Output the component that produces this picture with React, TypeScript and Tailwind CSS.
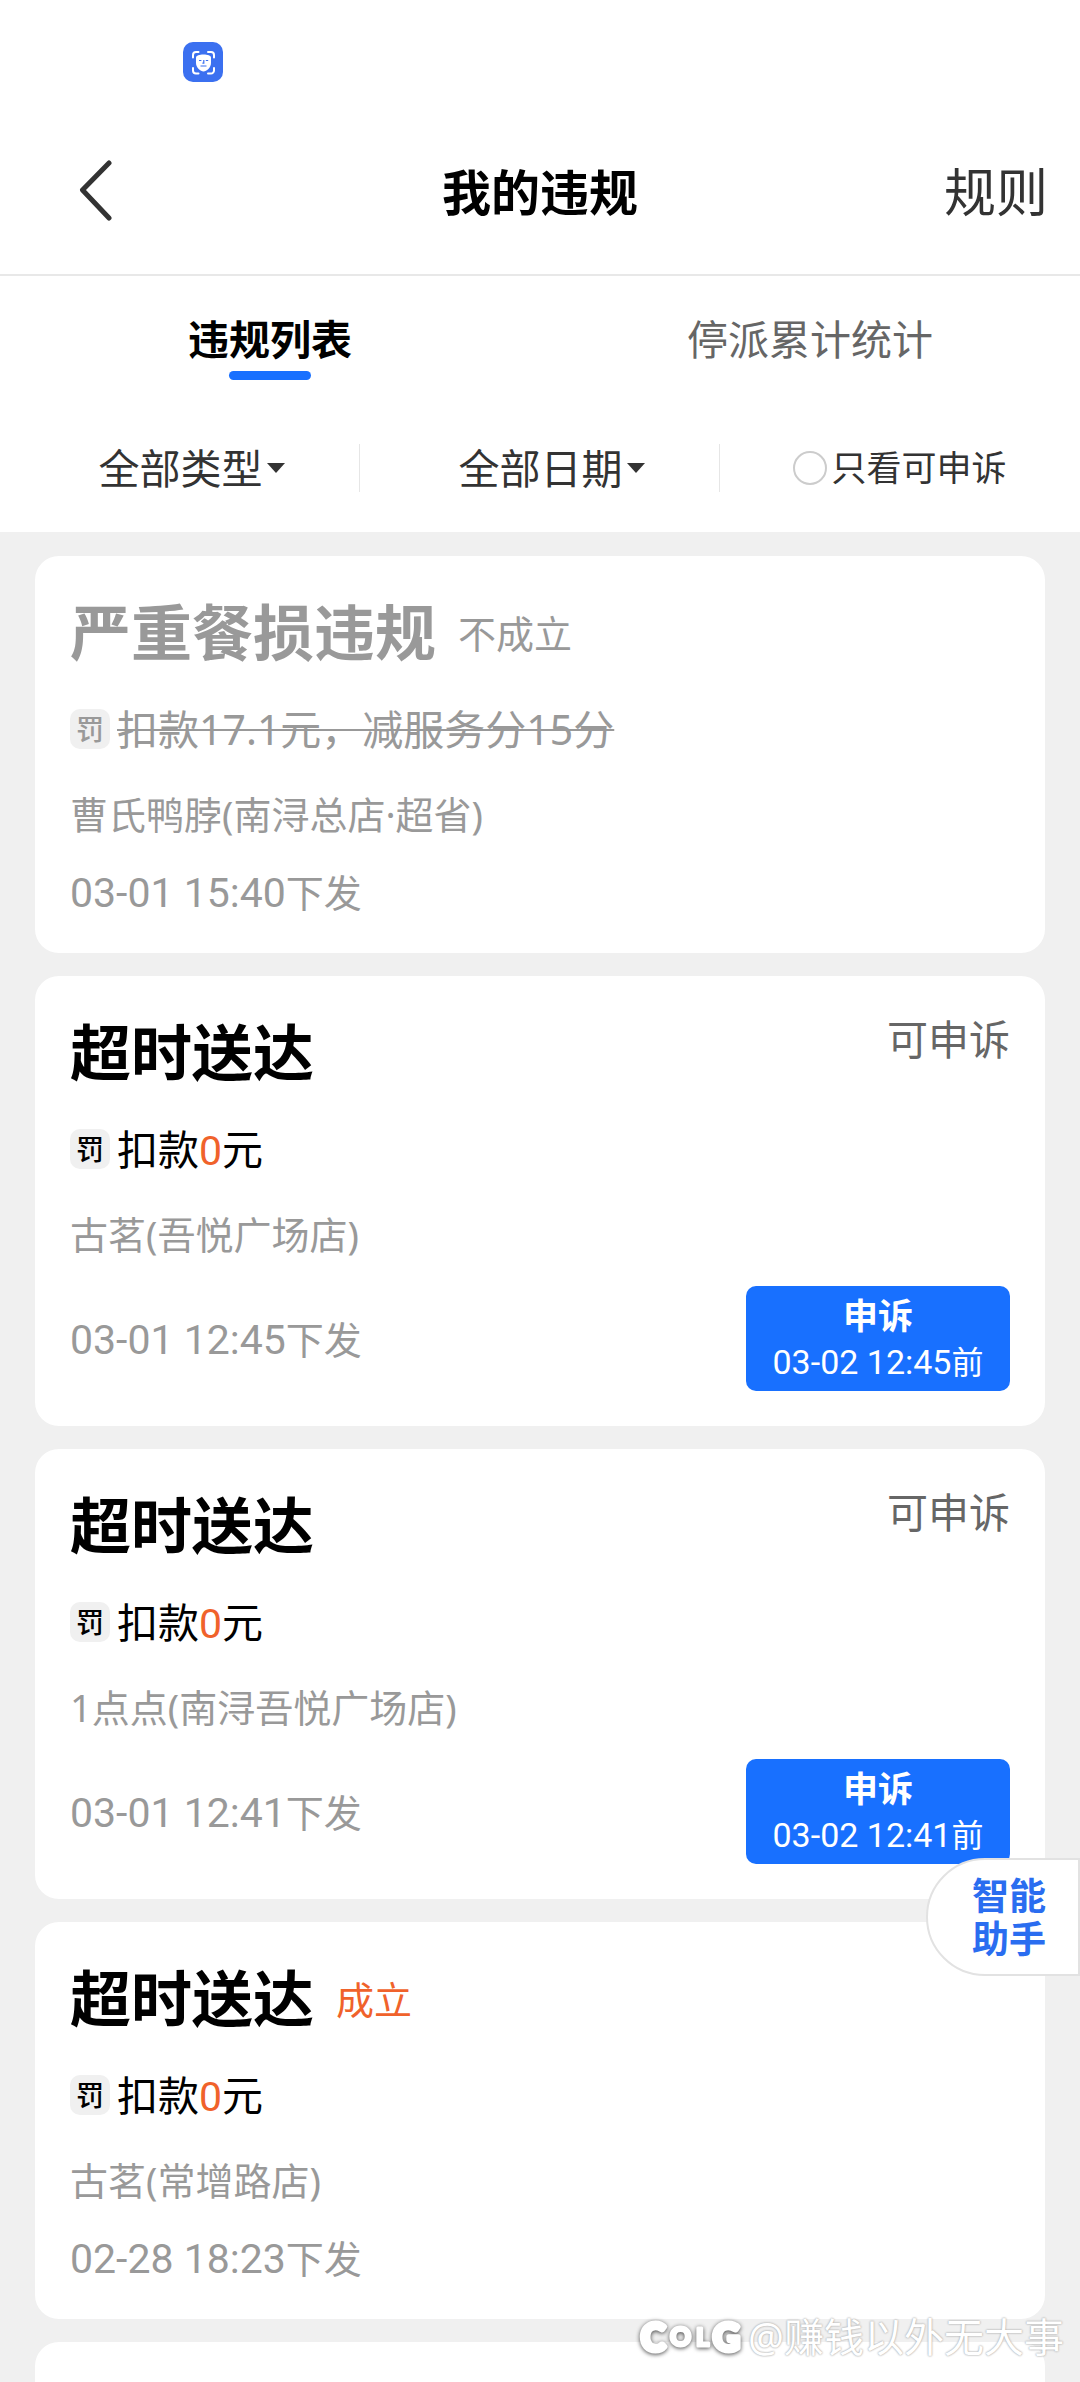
import { useState } from "react";

const violations = [
  {
    title: "严重餐损违规",
    status: "不成立",
    revoked: true,
    penalty: "扣款17.1元，减服务分15分",
    shop: "曹氏鸭脖(南浔总店·超省)",
    time: "03-01 15:40",
  },
  {
    title: "超时送达",
    amount: "0",
    shop: "古茗(吾悦广场店)",
    time: "03-01 12:45",
    deadline: "03-02 12:45",
  },
  {
    title: "超时送达",
    amount: "0",
    shop: "1点点(南浔吾悦广场店)",
    time: "03-01 12:41",
    deadline: "03-02 12:41",
  },
  {
    title: "超时送达",
    status: "成立",
    amount: "0",
    shop: "古茗(常增路店)",
    time: "02-28 18:23",
  },
];

type Violation = {
  title: string;
  status?: string;
  revoked?: boolean;
  penalty?: string;
  amount?: string;
  shop: string;
  time: string;
  deadline?: string;
};

const FaceIcon = () => (
  <svg viewBox="0 0 40 40" className="h-10 w-10" aria-hidden="true">
    <rect width="40" height="40" rx="10" fill="#3b70f0" />
    <g fill="none" stroke="#fff" strokeWidth="2" strokeLinecap="round">
      <path d="M10 15.5V13a3 3 0 0 1 3-3h2.500M25 10h3a3 3 0 0 1 3 3v2.500M31 26v2.500a3 3 0 0 1-3 3h-3M15.500 31.500H13a3 3 0 0 1-3-3V26" />
    </g>
    <path
      d="M13 15.500c0-2 3.500-3 7.500-3s7.500 1 7.500 3v5.500c0 4.500-4.500 8.500-7.500 8.500S13 25.500 13 21z"
      fill="#fff"
    />
    <g fill="none" stroke="#3b70f0" strokeWidth="1.200">
      <path d="M16 18.500h2.400M22.800 18.500h2.400M20.800 18v3.200h-1.400M17.500 24h6" />
    </g>
  </svg>
);

const Caret = () => (
  <svg viewBox="0 0 18 10" className="h-[10px] w-[18px]" aria-hidden="true">
    <path d="M0 0h18L9 10z" fill="#333" />
  </svg>
);

const Filter = ({ label }: { label: string }) => (
  <div className="flex h-12 items-center justify-center gap-1 border-r border-[#e6e6e6] pl-6">
    <select
      aria-label={label}
      className="appearance-none bg-transparent text-[41px] leading-[48px] text-[#333] outline-none"
    >
      <option>{label}</option>
    </select>
    <Caret />
  </div>
);

const ViolationCard = ({ item }: { item: Violation }) => {
  const main = item.revoked ? "text-[#999]" : "text-black";
  return (
    <article className="shrink-0 rounded-3xl bg-white p-[35px]">
      <div className="flex items-start justify-between">
        <div className="flex items-center gap-[22px]">
          <h2 className={`text-[61px] leading-[84px] font-bold ${main}`}>{item.title}</h2>
          {item.status && (
            <span className={`text-[38px] leading-[52px] ${item.revoked ? "text-[#999]" : "text-[#f0622b]"}`}>
              {item.status}
            </span>
          )}
        </div>
        {item.deadline && <span className="text-[41px] leading-[56px] text-[#666]">可申诉</span>}
      </div>

      <div className={`mt-[26px] flex items-center gap-[7px] text-[41px] leading-[56px] ${main}`}>
        <span className="flex h-10 w-10 items-center justify-center rounded-[10px] bg-[#f0f0f0] text-[28px] leading-[40px] font-medium">
          罚
        </span>
        {item.penalty ? (
          <s className="decoration-2">{item.penalty}</s>
        ) : (
          <p>
            扣款<span className="font-[Roboto] leading-none text-[#f0622b]">{item.amount}</span>元
          </p>
        )}
      </div>

      <p className="mt-[31px] text-[38px] leading-[52px] text-[#999]">{item.shop}</p>

      <div className="mt-[26px] flex items-center justify-between">
        <p className="text-[38px] leading-[52px] text-[#999]">
          <time className="font-[Roboto] text-[41px] leading-none">{item.time}</time>下发
        </p>
        {item.deadline && (
          <button
            type="button"
            className="flex h-[105px] min-w-[264px] flex-col items-center justify-center rounded-[10px] bg-[#1870ff] px-6 text-white"
          >
            <span className="text-[35px] leading-[46px] font-bold">申诉</span>
            <span className="text-[32px] leading-[46px]">
              <time className="font-[Roboto] text-[34px] leading-none">{item.deadline}</time>前
            </span>
          </button>
        )}
      </div>
    </article>
  );
};

const App = () => {
  const [tab, setTab] = useState(0);

  return (
    <div className="relative flex h-screen flex-col overflow-hidden bg-[#f0f0f0] font-['Noto_Sans','Noto_Sans_CJK_SC',sans-serif]">
      <header className="shrink-0 bg-white">
        <div className="flex h-[110px] items-start pt-[42px] pl-[183px]">
          <FaceIcon />
        </div>
        <div className="grid h-[166px] grid-cols-[1fr_auto_1fr] items-center border-b-2 border-[#e8e8e8]">
          <button type="button" aria-label="返回" className="ml-[78px] justify-self-start">
            <svg viewBox="0 0 36 64" className="h-16 w-9" fill="none" stroke="#333" strokeWidth="5" strokeLinecap="round" strokeLinejoin="round">
              <path d="M31 3 4.500 30 31 58" />
            </svg>
          </button>
          <h1 className="text-[49px] leading-[64px] font-bold text-black">我的违规</h1>
          <a href="#rules" className="mr-8 justify-self-end text-[52px] leading-[64px] text-[#333]">
            规则
          </a>
        </div>

        <nav className="grid grid-cols-2 pt-[31px] text-[41px] leading-[64px]">
          {["违规列表", "停派累计统计"].map((name, index) => (
            <button key={name} type="button" onClick={() => setTab(index)} className="flex flex-col items-center">
              <span className={tab === index ? "font-bold text-black" : "text-[#666]"}>{name}</span>
              <span className={`h-[9px] w-[82px] rounded-full ${tab === index ? "bg-[#1870ff]" : ""}`} />
            </button>
          ))}
        </nav>

        <div className="grid grid-cols-3 items-center pt-16 pb-10">
          <Filter label="全部类型" />
          <Filter label="全部日期" />
          <label className="flex h-12 items-center justify-center gap-1 text-[35px] leading-[48px] text-[#333]">
            <input
              type="checkbox"
              className="h-[34px] w-[34px] appearance-none rounded-full border-2 border-[#ccc] checked:border-[#1870ff] checked:bg-[#1870ff]"
            />
            只看可申诉
          </label>
        </div>
      </header>

      <main className="flex min-h-0 flex-1 flex-col gap-[23px] overflow-hidden px-[35px] pt-6">
        {violations.map((item, index) => (
          <ViolationCard key={index} item={item} />
        ))}
        <div className="h-96 shrink-0 rounded-3xl bg-white" />
      </main>

      <button
        type="button"
        className="absolute right-0 bottom-[406px] rounded-l-full border-2 border-[#e2e2e2] bg-white py-[14px] pr-8 pl-11 text-[37px] leading-[43px] font-bold text-[#2a6df0]"
      >
        智能
        <br />
        助手
      </button>

      <div className="pointer-events-none absolute right-4 bottom-5 flex items-center gap-1">
        <svg
          viewBox="0 0 106 44"
          className="h-11 w-[106px] overflow-visible drop-shadow-[0_1px_2px_rgba(0,0,0,0.7)]"
          aria-label="COLG"
        >
          <g fill="#fff" stroke="#fff" strokeWidth="5" strokeLinejoin="round" fontFamily="Lato, sans-serif" fontWeight="900">
            <text x="3" y="36" fontSize="37">C</text>
            <text x="32" y="31" fontSize="26" strokeWidth="3">O</text>
            <text x="58" y="31" fontSize="25" strokeWidth="3">L</text>
            <text x="75" y="36" fontSize="37">G</text>
          </g>
        </svg>
        <span className="text-[40px] leading-[50px] text-white [text-shadow:0_0_2px_#aaa,0_0_2px_#bbb]">@赚钱以外无大事</span>
      </div>
    </div>
  );
};

export default App;
